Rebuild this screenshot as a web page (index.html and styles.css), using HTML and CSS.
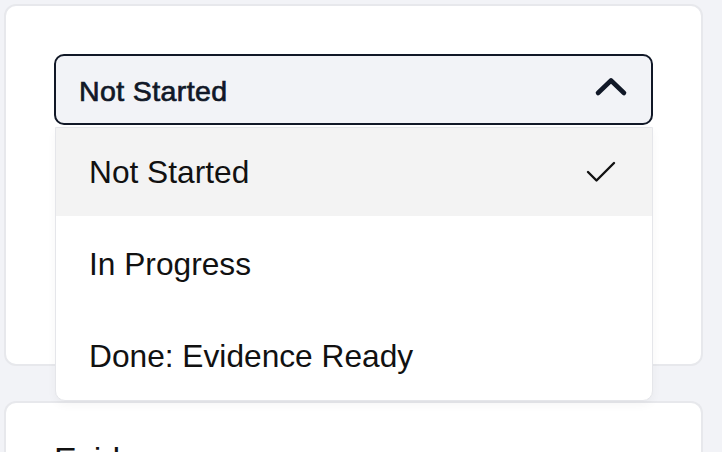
FILE: index.html
```html
<!DOCTYPE html>
<html>
<head>
<meta charset="utf-8">
<link rel="stylesheet" href="styles.css">
</head>
<body>
<div class="page">
  <section class="card status-card">
    <div class="select-wrap">
      <button class="select" type="button">
        <span class="select-label">Not Started</span>
        <svg class="chevron" width="34" height="22" viewBox="0 0 34 22" aria-hidden="true">
          <path d="M4 18 L17 5.5 L30 18" fill="none" stroke="#111827" stroke-width="4.6" stroke-linecap="round" stroke-linejoin="round"/>
        </svg>
      </button>
      <ul class="menu">
        <li class="option selected">
          <span>Not Started</span>
          <svg class="check" width="30" height="22" viewBox="0 0 30 22" aria-hidden="true">
            <path d="M2 11 L10.5 19.5 L28 2" fill="none" stroke="#111" stroke-width="2.4" stroke-linecap="round" stroke-linejoin="round"/>
          </svg>
        </li>
        <li class="option"><span>In Progress</span></li>
        <li class="option"><span>Done: Evidence Ready</span></li>
      </ul>
    </div>
  </section>
  <section class="card evidence-card">
    <h2 class="card-title">Evidence</h2>
  </section>
</div>
</body>
</html>
```
FILE: styles.css
```css
* { box-sizing: border-box; }
html, body {
  margin: 0;
  padding: 0;
  background: #f2f3f7;
  font-family: "Liberation Sans", Arial, Helvetica, sans-serif;
  overflow: hidden;
  height: 452px;
}
.page {
  padding: 4px 19px 0 4px;
  display: flex;
  flex-direction: column;
  gap: 35px;
}
.card {
  background: #fff;
  border: 2px solid #e7e8ec;
  border-radius: 12px;
}
.status-card {
  height: 362px;
  padding: 48px;
}
.select-wrap {
  position: relative;
}
.select {
  width: 100%;
  height: 71px;
  display: flex;
  align-items: center;
  justify-content: space-between;
  padding: 0 23px 0 23px;
  background: #f2f3f7;
  border: 2px solid #111827;
  border-radius: 10px;
  font-family: inherit;
  cursor: pointer;
}
.select-label {
  font-size: 28.5px;
  font-weight: 400;
  letter-spacing: 0.4px;
  -webkit-text-stroke: 0.7px #111827;
  color: #111827;
  padding-top: 3px;
}
.chevron { display: block; margin-top: -8px; }
.menu {
  position: absolute;
  top: 73px;
  left: 1px;
  right: 0;
  margin: 0;
  padding: 0;
  list-style: none;
  background: #fff;
  border: 1px solid #e5e6ea;
  border-radius: 0 0 10px 10px;
  box-shadow: 0 4px 10px rgba(0,0,0,0.04);
  display: flex;
  flex-direction: column;
  gap: 4px;
  z-index: 2;
}
.option {
  height: 88px;
  display: flex;
  align-items: center;
  justify-content: space-between;
  padding: 0 36px 0 33px;
  font-size: 31.7px;
  color: #111;
}
.option.selected { background: #f3f3f3; }
.check { display: block; }
.evidence-card {
  height: 200px;
  padding: 37px 48px;
  border-bottom: none;
  border-radius: 12px 12px 0 0;
}
.card-title {
  margin: 0;
  font-size: 34px;
  font-weight: 500;
  color: #111;
}
```
